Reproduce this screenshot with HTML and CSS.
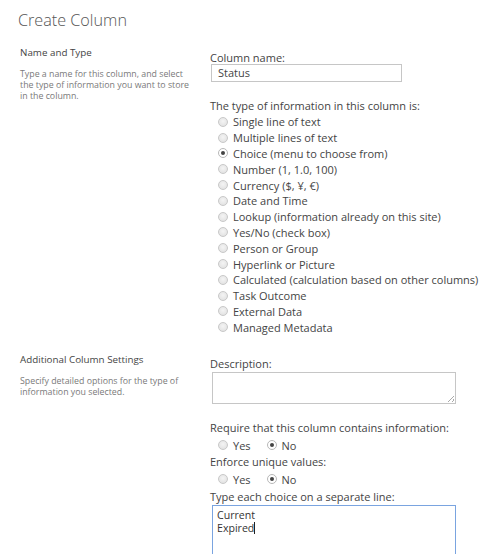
FILE: index.html
```html
<!DOCTYPE html>
<html>
<head>
<meta charset="utf-8">
<link rel="stylesheet" href="styles.css">
</head>
<body>
<div class="page">
  <h1 class="title">Create Column</h1>

  <section class="section first">
    <div class="left">
      <div class="sec-head">Name and Type</div>
      <div class="sec-desc">Type a name for this column, and select the type of information you want to store in the column.</div>
    </div>
    <div class="right">
      <div class="label">Column name:</div>
      <div class="input">Status</div>
      <div class="label type-label">The type of information in this column is:</div>
      <ul class="radios">
        <li><span class="radio"></span>Single line of text</li>
        <li><span class="radio"></span>Multiple lines of text</li>
        <li><span class="radio on"></span>Choice (menu to choose from)</li>
        <li><span class="radio"></span>Number (1, 1.0, 100)</li>
        <li><span class="radio"></span>Currency ($, ¥, €)</li>
        <li><span class="radio"></span>Date and Time</li>
        <li><span class="radio"></span>Lookup (information already on this site)</li>
        <li><span class="radio"></span>Yes/No (check box)</li>
        <li><span class="radio"></span>Person or Group</li>
        <li><span class="radio"></span>Hyperlink or Picture</li>
        <li><span class="radio"></span>Calculated (calculation based on other columns)</li>
        <li><span class="radio"></span>Task Outcome</li>
        <li><span class="radio"></span>External Data</li>
        <li><span class="radio"></span>Managed Metadata</li>
      </ul>
    </div>
  </section>

  <section class="section second">
    <div class="left">
      <div class="sec-head">Additional Column Settings</div>
      <div class="sec-desc">Specify detailed options for the type of information you selected.</div>
    </div>
    <div class="right">
      <div class="label">Description:</div>
      <div class="textarea desc"><span class="grip"></span></div>
      <div class="label req-label">Require that this column contains information:</div>
      <div class="inline-radios"><span class="opt"><span class="radio"></span>Yes</span><span class="opt"><span class="radio on"></span>No</span></div>
      <div class="label">Enforce unique values:</div>
      <div class="inline-radios"><span class="opt"><span class="radio"></span>Yes</span><span class="opt"><span class="radio on"></span>No</span></div>
      <div class="label choice-label">Type each choice on a separate line:</div>
      <div class="textarea choices"><div class="line">Current</div><div class="line">Expired<span class="caret"></span></div></div>
    </div>
  </section>
</div>
</body>
</html>
```

FILE: styles.css
```css
html, body {
  margin: 0;
  padding: 0;
  background: #ffffff;
}
body {
  font-family: "Open Sans", "Noto Sans", sans-serif;
  color: #444444;
  width: 492px;
  height: 554px;
  overflow: hidden;
}
.page {
  padding: 0 0 0 18px;
}
.title {
  margin: 0;
  padding-top: 10px;
  font-size: 16.2px;
  font-weight: 300;
  line-height: 20px;
  color: #555555;
}
.section {
  display: flex;
}
.section.first {
  margin-top: 15px;
}
.section.second {
  margin-top: 18px;
}
.left {
  width: 170px;
  padding-left: 2px;
  flex: none;
}
.first .left {
  padding-top: 1px;
}
.right {
  flex: 1;
  padding-left: 20px;
}
.second .right {
  padding-top: 3px;
}
.sec-head {
  font-size: 9.8px;
  line-height: 13px;
  color: #444444;
}
.sec-desc {
  margin-top: 10px;
  font-size: 8.8px;
  line-height: 11px;
  color: #7a7a7a;
}
.label {
  font-size: 11px;
  line-height: 16px;
  color: #444444;
  white-space: nowrap;
}
.first .right .label:first-child {
  margin-top: 5px;
}
.input {
  width: 183px;
  height: 16px;
  margin: -2px 0 0 1px;
  border: 1px solid #c6c6c6;
  padding-left: 6px;
  font-size: 11px;
  line-height: 16px;
  color: #444444;
}
.type-label {
  margin-top: 16px;
}
.radios {
  list-style: none;
  margin: 0;
  padding: 0;
}
.radios li {
  display: flex;
  align-items: center;
  height: 15.8px;
  font-size: 11px;
  color: #444444;
  white-space: nowrap;
}
.radio {
  display: inline-block;
  box-sizing: border-box;
  width: 10px;
  height: 10px;
  border-radius: 50%;
  border: 1px solid #c8c8c8;
  background: radial-gradient(circle at 50% 40%, #f4f4f4 0%, #dedede 100%);
  margin: 0 5px 0 8px;
  flex: none;
  position: relative;
}
.radio.on {
  background: #ffffff;
  border-color: #b8b8b8;
}
.radio.on::after {
  content: "";
  position: absolute;
  left: 2px;
  top: 2px;
  width: 4px;
  height: 4px;
  border-radius: 50%;
  background: #444444;
}
.textarea {
  box-sizing: border-box;
  width: 244px;
  margin-left: 2px;
  border: 1px solid #c6c6c6;
  position: relative;
}
.textarea.desc {
  height: 32px;
}
.grip {
  position: absolute;
  right: 1px;
  bottom: 1px;
  width: 6px;
  height: 6px;
  background: linear-gradient(135deg, transparent 45%, #aaa 45%, #aaa 55%, transparent 55%, transparent 75%, #aaa 75%, #aaa 85%, transparent 85%);
}
.req-label {
  margin-top: 16px;
}
.inline-radios {
  display: flex;
  align-items: center;
  height: 18px;
  font-size: 11px;
  color: #444444;
}
.opt {
  display: inline-flex;
  align-items: center;
}
.opt + .opt .radio {
  margin-left: 16px;
}
.choice-label {
  margin-top: 1px;
}
.textarea.choices {
  height: 60px;
  margin-top: 0;
  border: 1px solid #7aa4e0;
  padding: 3px 0 0 4px;
  font-size: 10.6px;
  color: #333333;
}
.line {
  height: 13px;
  line-height: 13px;
  white-space: nowrap;
}
.caret {
  display: inline-block;
  width: 1px;
  height: 12px;
  background: #222;
  vertical-align: -2px;
}
```
